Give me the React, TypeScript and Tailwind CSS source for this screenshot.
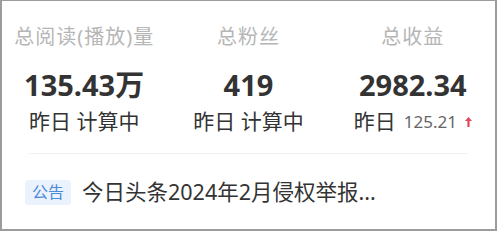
import React from 'react';

const font = { fontFamily: '"Noto Sans", "Noto Sans CJK SC", sans-serif' };

function Stat({ label, value, sub }: { label: string; value: string; sub: React.ReactNode }) {
  return (
    <div className="flex-1 flex flex-col items-center">
      <div className="h-[28px] flex items-center text-[20px] tracking-[1px] text-[#b6b6b6]">{label}</div>
      <div className="mt-[18px] h-[30px] flex items-center text-[29px] font-bold leading-none text-[#333]">{value}</div>
      <div className="mt-[11px] h-[24px] flex items-center text-[21px] text-[#333]">{sub}</div>
    </div>
  );
}

export default function App() {
  return (
    <div
      className="w-[497px] h-[231px] bg-white border-t border-l-2 border-r-2 border-b-2 border-[#9c9c9c] flex flex-col"
      style={font}
    >
      <div className="flex pt-[22px]">
        <Stat label="总阅读(播放)量" value="135.43万" sub={<span>昨日 计算中</span>} />
        <Stat label="总粉丝" value="419" sub={<span>昨日 计算中</span>} />
        <Stat
          label="总收益"
          value="2982.34"
          sub={
            <span className="flex items-center">
              <span>昨日</span>
              <span className="ml-[8px] text-[17px] text-[#666]">125.21</span>
              <svg className="ml-[8px]" width="7" height="10" viewBox="0 0 7 10">
                <path d="M3.5 0 L7 4 L4.6 4 L4.6 10 L2.4 10 L2.4 4 L0 4 Z" fill="#e0485a" />
              </svg>
            </span>
          }
        />
      </div>
      <div className="mx-[27px] mt-[19px] h-px bg-[#f2f2f2]" />
      <div className="flex items-center pl-[23px] mt-[22px]">
        <span className="px-[7px] h-[25px] flex items-center rounded-[3px] bg-[#e9f2fd] text-[16px] text-[#4a8ad9]">公告</span>
        <span className="ml-[11px] text-[21.5px] text-[#333]">今日头条2024年2月侵权举报...</span>
      </div>
    </div>
  );
}
